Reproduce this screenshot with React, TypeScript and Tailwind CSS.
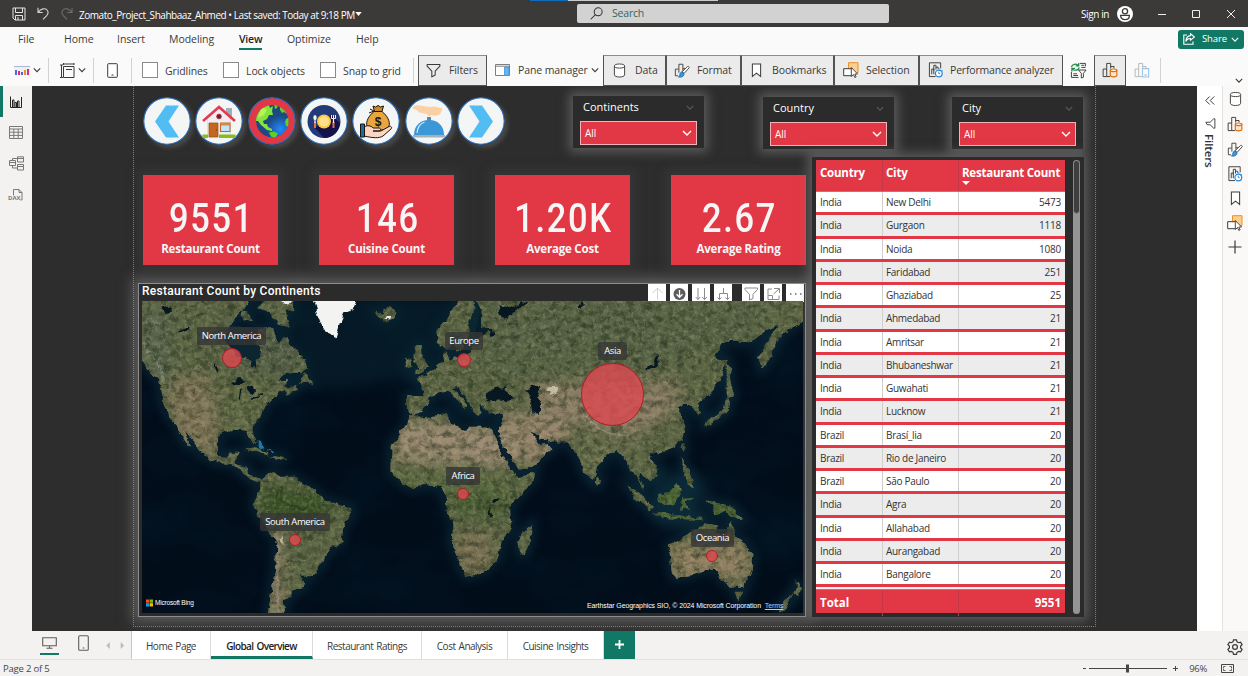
import React from "react";

const INK = "#3b3a39";

type IconProps = { className?: string };

/* ---------- small icons ---------- */
const Chevron = ({ className = "" }: IconProps) => (
  <svg viewBox="0 0 10 6" className={`shrink-0 ${className}`} fill="none" stroke="currentColor" strokeWidth="1.4">
    <path d="M1 1l4 4 4-4" />
  </svg>
);

const Funnel = ({ className = "" }: IconProps) => (
  <svg viewBox="0 0 16 16" className={`shrink-0 ${className}`} fill="none" stroke="currentColor" strokeWidth="1.1" strokeLinejoin="round">
    <path d="M1.2 1.6h13.6v1.8L9.8 8.6v4.2l-3.6 2V8.6L1.2 3.4z" />
  </svg>
);

const Cylinder = ({ className = "" }: IconProps) => (
  <svg viewBox="0 0 14 16" className={`shrink-0 ${className}`} fill="#fff" stroke={INK} strokeWidth="1">
    <path d="M1.5 3.2v9.6c0 1.2 2.4 2.2 5.5 2.2s5.5-1 5.5-2.2V3.2" />
    <ellipse cx="7" cy="3.2" rx="5.5" ry="2.2" />
  </svg>
);

const FormatIcon = ({ className = "" }: IconProps) => (
  <svg viewBox="0 0 18 18" className={`shrink-0 ${className}`} fill="none" stroke={INK} strokeWidth="1">
    <path d="M4.5 15.5h-3V8H5M5.5 12V2.500H10V10M10 7.500h3" />
    <path d="M16.600 5.200c.7.600.7 1 .2 1.600l-5.400 6-2.200-1.800 5.700-5.700c.6-.6 1.100-.6 1.700-.1z" fill="#fff" />
    <path d="M8.800 11.200l2.400 2c.2 2.600-2.200 4.400-6.200 3.600 1.500-.7 1.500-1.700 1.700-3 .2-1.500 1-2.400 2.100-2.600z" fill="#3a96dd" stroke="#1664a7" />
  </svg>
);

const BookmarkIcon = ({ className = "" }: IconProps) => (
  <svg viewBox="0 0 12 16" className={`shrink-0 ${className}`} fill="#fff" stroke={INK} strokeWidth="1.1">
    <path d="M1.500 1h9v13.500L6 10.800l-4.500 3.700z" />
  </svg>
);

const SelectionIcon = ({ className = "" }: IconProps) => (
  <svg viewBox="0 0 16 16" className={`shrink-0 ${className}`}>
    <path d="M5.500.7h9.500v10H5.500z" fill="#fcd08a" stroke="#e8912d" />
    <path d="M.7 6.700h8.500v7H.7z" fill="#fff" stroke={INK} />
    <path d="M8.300 5.500v9l2.200-2 1.300 3 1.300-.6-1.300-2.900h2.800z" fill="#fff" stroke={INK} strokeWidth=".9" />
  </svg>
);

const PerfIcon = ({ className = "" }: IconProps) => (
  <svg viewBox="0 0 16 17" className={`shrink-0 ${className}`} fill="none" stroke={INK} strokeWidth="1">
    <path d="M8 15.500H1.500V.8h12v6M4 13V7.500h2.200V13M6.200 9V3.500h2.300V8M8.500 5.500h2.300V7" />
    <circle cx="11.500" cy="12.200" r="3.600" stroke="#2b88d8" strokeWidth="1.300" fill="#fff" />
    <path d="M11.500 10.200v2.200h1.500M10.500 7.300h2M14.600 8.600l.9.900" stroke="#2b88d8" />
  </svg>
);

const BuildIcon = ({ className = "" }: IconProps) => (
  <svg viewBox="0 0 17 17" className={`shrink-0 ${className}`} fill="none" stroke={INK} strokeWidth="1">
    <path d="M5 15.500H1.200V7.500H5M8.500 15.500H5V1.500h4.200V7M9.200 4.800h3.600v2" />
    <path d="M8.800 8.800v5.400c0 .9 1.500 1.600 3.500 1.600s3.500-.7 3.500-1.600V8.800" fill="#fce3cc" stroke="#e06c00" strokeWidth="1.200" />
    <ellipse cx="12.300" cy="8.800" rx="3.500" ry="1.400" fill="#fff" stroke="#e06c00" strokeWidth="1.200" />
  </svg>
);

const BuildFaded = ({ className = "" }: IconProps) => (
  <svg viewBox="0 0 17 17" className={`shrink-0 ${className}`} fill="none" stroke="#b5b5b5" strokeWidth="1">
    <path d="M5 15.500H1.200V7.500H5M8.500 15.500H5V1.500h4.200V7M9.200 4.800h3.600v2" />
    <path d="M9 7h6.500v9H9zM11 14h2.500" stroke="#9cc6ea" strokeWidth="1.200" />
  </svg>
);

const SyncIcon = ({ className = "" }: IconProps) => (
  <svg viewBox="0 0 18 18" className={`shrink-0 ${className}`} fill="none" stroke={INK} strokeWidth="1">
    <path d="M10.500 1.500h5.800v3.200M12 3.500h3M12 5.800h4.300M1.500 10.500v5.800h7.500M3.500 12.500h4M3.500 14.300h5" />
    <path d="M1.500 5.500C2 2.500 6.500 1 9 3.800M9.200 1v3.200H6M9.800 5.600c-.6 3-5 4.300-7.500 1.600M2 10V6.800h3.200" stroke="#218a43" strokeWidth="1.300" />
    <path d="M9 8.500h8l-2.800 3.500v4.200l-2.200.8v-5z" fill="#fff" />
  </svg>
);

/* ---------- round navigation icons ---------- */
const NavLeft = () => <path d="M23 8.500h13L25.500 24.500 36 40.500H23L12 24.500z" fill="#52bdf2" />;
const NavRight = () => <path d="M25 8.500H12l10.500 16L12 40.500h13l11-16z" fill="#52bdf2" />;

const House = () => (
  <g>
    <path d="M31 11h6v11h-6z" fill="#9db0b8" />
    <path d="M24 10L12.500 22v18h23V22z" fill="#f1ecf0" stroke="#dcd6da" strokeWidth=".7" />
    <path d="M8 24L24 10l16 14" fill="none" stroke="#e63950" strokeWidth="2.600" />
    <circle cx="24" cy="19.500" r="2.400" fill="#4b2f3a" stroke="#d8293f" strokeWidth=".8" />
    <path d="M14 26h9v14h-9z" fill="#c4661f" stroke="#9b4d14" strokeWidth=".7" />
    <circle cx="21.300" cy="33" r=".6" fill="#4a2408" />
    <path d="M25.500 26h9.500v8.500h-9.500z" fill="#bfe6f7" stroke="#c4661f" strokeWidth="1.100" />
    <path d="M25.500 26h9.500v2.500h-9.500z" fill="#d58746" />
    <path d="M7.500 37.500H13V41H7.500zM24 37.500h16.500V41H24z" fill="#84bf1c" />
  </g>
);

const Globe = () => (
  <g>
    <defs>
      <radialGradient id="sea" cx=".75" cy=".75" r=".7">
        <stop offset="0" stopColor="#1f8cff" />
        <stop offset=".6" stopColor="#1b4b86" />
        <stop offset="1" stopColor="#1c4a80" />
      </radialGradient>
      <clipPath id="ball"><circle cx="24.300" cy="24.300" r="16.300" /></clipPath>
    </defs>
    <g clipPath="url(#ball)">
      <circle cx="24.300" cy="24.300" r="16.300" fill="url(#sea)" />
      <path d="M7 24l1-9 7-6 6-1 1 3 3-2-1 5 1 4-4 0-2 4-4 2 1 3 3 0 1 3 4 2 0 2-5-1-6-5-3-4z" fill="#86e33c" />
      <path d="M13 11l6 1-3 6-6 3z" fill="#b6f358" />
      <path d="M26 7l4 1-1 3-2 1zM32 9l5 4 2 4-3-2-2 1-2-3zM38 22l4-2v10l-4-1-1-4zM21 35.500l5-1 4 2-3 5-4-2z" fill="#5fd024" />
    </g>
  </g>
);

const Dinner = () => (
  <g>
    <circle cx="24" cy="24.500" r="16.500" fill="#243a78" />
    <path d="M31 18l9 8c-1 9-8 15-16 15l-9-10z" fill="#15124a" />
    <circle cx="24" cy="24.500" r="7" fill="#fbc847" />
    <circle cx="24" cy="24.500" r="5" fill="#ffe08a" />
    <path d="M15 25v6M33.500 25v6" stroke="#e0704e" strokeWidth="2" />
    <path d="M15 22v4M33.500 21v5" stroke="#f4f4f4" strokeWidth="1.200" />
    <ellipse cx="15" cy="20.500" rx="1.700" ry="2.600" fill="#f4f4f4" />
    <path d="M31.500 18v3.500h4V18M33.500 18v4" fill="none" stroke="#f4f4f4" strokeWidth="1" />
  </g>
);

const Money = () => (
  <g stroke="#1b1512" strokeWidth="1" strokeLinejoin="round">
    <path d="M22 14.500c-5 4-8.500 10-7 14.500 1 3 4 4 11 4s10-1 11-4c1.500-4.500-2-10.500-7-14.500z" fill="#e9a63f" />
    <path d="M21 9l2.500 1L26 8.500l2.500 1.500 3-1-1.500 5.500h-7.500z" fill="#c98a2b" />
    <path d="M18 12l4 2-5 2" fill="none" />
    <path d="M12 30c3-2 7-1.500 9 1h6c2 0 2 3 0 3h-6 8l8-4.500c2-.8 3.500 1 2 2.500L31 39c-4 2.500-10 2-19 0z" fill="#fbd5c0" />
    <path d="M8.500 27h4v13h-4z" fill="#236b94" />
    <text x="26" y="28.500" textAnchor="middle" fontSize="12" fontWeight="700" fontFamily="Liberation Sans, sans-serif" fill="#1b1512" stroke="none">$</text>
  </g>
);

const Cloche = () => (
  <g>
    <path d="M7.500 12c1-3.500 3-4 7-3.500l10 1.500 5-.5 8 2-2.500 6-5 1.500-3.500-1-2.500 1.500-2.500-2.500-7-1.500-3.500-3z" fill="#fbd0a3" />
    <path d="M22 20h4v4h-4z" fill="#77838a" />
    <path d="M9 38c0-9 6-15 15-15s15 6 15 15z" fill="#3a97d8" />
    <path d="M12 36c.5-6 3.500-9.500 7.500-11" fill="none" stroke="#d6ecf9" strokeWidth="1.100" />
    <path d="M8 38h32v2.500H8z" fill="#a6b1b6" />
  </g>
);

const navIcons = [NavLeft, House, Globe, Dinner, Money, Cloche, NavRight];

const NavCircle = ({ index, Art }: { index: number; Art: () => React.ReactElement }) => (
  <svg viewBox="0 0 48 48" className="h-12 w-12 rounded-full shadow-[3px_3px_4px_rgba(80,80,80,0.8)]">
    <circle cx="24" cy="24" r="23.300" fill={index === 2 ? "#e23744" : "#f4f5f5"} stroke="#2f6cb3" strokeWidth="1.300" />
    <Art />
  </svg>
);

/* ---------- title bar ---------- */
const TitleBar = () => (
  <div className="relative flex h-[27px] shrink-0 items-center bg-[#3b3a39] text-white">
    <div className="absolute left-[530px] top-0 h-px w-[38px] bg-[#0f6cbd]" />
    <div className="absolute left-[568px] top-0 h-px w-[150px] bg-[#c8cccb]" />
    <svg viewBox="0 0 14 14" className="ml-3 h-[14px] w-[14px]" fill="none" stroke="#e4e4e4" strokeWidth="1">
      <path d="M1 1h12v12H3l-2-2zM3.500 1v4.500h7V1M3.500 13V8.500h7V13M6 10v3" />
    </svg>
    <svg viewBox="0 0 12 13" className="ml-[11px] h-[13px] w-3" fill="none" stroke="#d4d4d4" strokeWidth="1.100">
      <path d="M1 .8v4.700h4.700M1.200 5.200C4 1.500 8 .7 10 3s1.200 4-.5 5.800L6 12.300" />
    </svg>
    <svg viewBox="0 0 12 13" className="ml-3 h-[13px] w-3" fill="none" stroke="#6f6e6d" strokeWidth="1.100">
      <path d="M11 .8v4.700H6.300M10.800 5.200C8 1.500 4 .7 2 3s-1.200 4 .5 5.800L6 12.300" />
    </svg>
    <div className="ml-[6px] w-[273px] whitespace-nowrap pt-[4px] text-[10px] tracking-[-0.460px]">
      Zomato_Project_Shahbaaz_Ahmed • Last saved: Today at 9:18 PM
    </div>
    <svg viewBox="0 0 8 5" className="ml-[3px] h-[4px] w-[7px]"><path d="M0 0h8L4 5z" fill="#fff" /></svg>
    <div className="ml-[215px] flex h-[19px] w-[312px] items-center rounded-[2px] bg-[#d2d2d2] pl-[13px] text-[10.500px] text-[#33665b]">
      <svg viewBox="0 0 14 14" className="mr-[9px] h-[13px] w-[13px]" fill="none" stroke="#333" strokeWidth="1.100">
        <circle cx="8.800" cy="5.200" r="4.300" /><path d="M5.600 8.400L.8 13.200" />
      </svg>
      <span className="tracking-[-0.2px]">Search</span>
    </div>
    <div className="ml-[192px] w-[30px] whitespace-nowrap pt-px text-[10px] tracking-[-0.400px]">Sign in</div>
    <svg viewBox="0 0 16 16" className="ml-[6px] h-4 w-4">
      <circle cx="8" cy="8" r="8" fill="#fff" />
      <circle cx="8" cy="5.300" r="2.600" fill="none" stroke="#3b3a39" strokeWidth="1.300" />
      <path d="M3.600 9.400h8.800c0 2.600-1.800 4.200-4.400 4.200s-4.400-1.600-4.400-4.200z" fill="none" stroke="#3b3a39" strokeWidth="1.300" />
    </svg>
    <svg viewBox="0 0 80 10" className="ml-[24px] h-[10px] w-[80px]" fill="none" stroke="#eee" strokeWidth="1">
      <path d="M1 5.500h8M35.500 1.500h7v7h-7zM70 1l8 8M78 1l-8 8" />
    </svg>
  </div>
);

/* ---------- ribbon ---------- */
const menu = [
  { label: "File", cls: "w-[46px]" },
  { label: "Home", cls: "w-[53px]" },
  { label: "Insert", cls: "w-[52px]" },
  { label: "Modeling", cls: "w-[70px]" },
  { label: "View", cls: "w-[48px]" },
  { label: "Optimize", cls: "w-[69px]" },
  { label: "Help", cls: "w-[40px]" },
];

const Check = ({ label, cls }: { label: string; cls: string }) => (
  <div className={`flex shrink-0 items-center ${cls}`}>
    <div className="mr-[7px] h-4 w-4 shrink-0 border border-[#8a8987] bg-white" />
    <span className="whitespace-nowrap pt-[3px]">{label}</span>
  </div>
);

const Divider = ({ cls = "" }: { cls?: string }) => <div className={`h-[25px] w-px shrink-0 bg-[#d5d3d1] ${cls}`} />;

const RibbonButton = ({ cls, label, children }: { cls: string; label?: string; children: React.ReactNode }) => (
  <div className={`flex h-[31px] shrink-0 items-center whitespace-nowrap border border-[#55534f] border-t-[#8f8d8b] bg-[#ebebeb] ${cls}`}>
    {children}
    {label && <span className="pt-[2px]">{label}</span>}
  </div>
);

const Ribbon = () => (
  <div className="flex h-[59px] shrink-0 flex-col bg-[#fafafa] text-[10.500px] tracking-[-0.1px] text-[#3b3a39]">
    <div className="flex h-[27px] items-center pl-[18px] pr-[5px]">
      {menu.map((m) => (
        <div key={m.label} className={`flex h-full flex-col items-start pt-[5px] ${m.cls}`}>
          <div className={m.label === "View" ? "border-b-2 border-[#117865] pb-px font-semibold leading-[15px] tracking-[-0.200px] text-[#222]" : "leading-[15px] tracking-[-0.050px]"}>{m.label}</div>
        </div>
      ))}
      <div className="-mr-px -mt-[3px] ml-auto flex h-[19px] w-[66px] items-center rounded-[3px] bg-[#117865] pl-[5px] text-[9.500px] text-white">
        <svg viewBox="0 0 12 12" className="mr-[7px] h-3 w-3" fill="none" stroke="#fff" strokeWidth="1.100">
          <path d="M4 2H.8v9.200H10V8.500M7.500.8l4 3.200-4 3.200V5.500C5 5.400 3.500 6.500 2.800 8.500 3 5 4.500 2.800 7.500 2.600z" />
        </svg>
        Share
        <Chevron className="ml-[4px] h-[5px] w-[8px]" />
      </div>
    </div>
    <div className="flex h-8 items-center">
      <svg viewBox="0 0 16 9" className="ml-[14px] h-[9px] w-4 shrink-0">
        <path d="M0 0h16v9H0z" fill="#f3ecf0" />
        <path d="M1 4h2v5H1zM7 6h2v3H7z" fill="#4a6fe0" />
        <path d="M4 5h2v4H4zM13 3h2v6h-2z" fill="#d6336c" />
        <path d="M10 4h2v5h-2z" fill="#e8912d" />
        <path d="M0 0h16v1H0z" fill="#a7b7d8" />
      </svg>
      <Chevron className="ml-[3px] h-[6px] w-[8px]" />
      <Divider cls="ml-[7px]" />
      <svg viewBox="0 0 15 15" className="ml-[11px] h-[15px] w-[15px] shrink-0" fill="none" stroke={INK} strokeWidth="1">
        <path d="M3.500 3.500h10.500v11H3.500zM1.500 2v12.500M0 2h3M0 14.500h3M3.500 1h10.500M3.500 0v2M14 0v2M6 6.500h6" />
      </svg>
      <Chevron className="ml-[3px] h-[6px] w-[8px]" />
      <Divider cls="ml-[7px]" />
      <svg viewBox="0 0 11 15" className="ml-[13px] h-[15px] w-[11px] shrink-0" fill="#fff" stroke={INK} strokeWidth="1">
        <rect x=".7" y=".7" width="9.600" height="13.600" rx=".6" /><path d="M4.500 12h2" />
      </svg>
      <Divider cls="ml-[13px]" />
      <Check label="Gridlines" cls="ml-[10px] w-[81px]" />
      <Check label="Lock objects" cls="w-[97px]" />
      <Check label="Snap to grid" cls="w-[93px]" />
      <Divider />
      <RibbonButton cls="ml-[4px] w-[69px] pl-[7px]" label="Filters"><Funnel className="mr-[8px] h-[15px] w-[15px]" /></RibbonButton>
      <div className="flex w-[116px] shrink-0 items-center whitespace-nowrap pl-[8px]">
        <svg viewBox="0 0 15 12" className="mr-[8px] h-3 w-[15px] shrink-0" fill="#fff" stroke="#807e7c">
          <path d="M.5.500h14v11H.5z" /><path d="M1 2.200h13" /><path d="M9.500 3h4.500v8.500H9.500z" fill="#6cb2ea" stroke="#3f94dc" strokeWidth=".8" />
        </svg>
        <span className="pt-[2px]">Pane manager</span>
        <Chevron className="ml-[3px] h-[6px] w-[8px]" />
      </div>
      <RibbonButton cls="w-[63px] pl-[9px]" label="Data"><Cylinder className="mr-[9px] h-[15px] w-[13px]" /></RibbonButton>
      <RibbonButton cls="w-[75px] pl-[7px]" label="Format"><FormatIcon className="mr-[7px] h-4 w-4" /></RibbonButton>
      <RibbonButton cls="w-[93px] pl-[9px]" label="Bookmarks"><BookmarkIcon className="mr-[10px] h-[15px] w-[11px]" /></RibbonButton>
      <RibbonButton cls="w-[85px] pl-[8px]" label="Selection"><SelectionIcon className="mr-[7px] h-4 w-4" /></RibbonButton>
      <RibbonButton cls="w-[144px] pl-[8px] tracking-[-0.180px]" label="Performance analyzer"><PerfIcon className="mr-[7px] h-4 w-[15px]" /></RibbonButton>
      <SyncIcon className="ml-[7px] h-[17px] w-[17px]" />
      <RibbonButton cls="ml-[7px] w-[32px] justify-center"><BuildIcon className="h-4 w-4" /></RibbonButton>
      <BuildFaded className="ml-[8px] h-4 w-4" />
      <Divider cls="ml-[10px]" />
      <Chevron className="ml-auto mr-[5px] mt-[20px] h-[5px] w-[8px]" />
    </div>
  </div>
);

/* ---------- report visuals ---------- */
const Slicer = ({ title, cls }: { title: string; cls: string }) => (
  <div className={`h-[52px] w-[131px] bg-[#2b2b2b] px-[7px] text-white shadow-[0_0_10px_4px_rgba(135,135,135,0.5)] ${cls}`}>
    <div className="flex h-[25px] items-center justify-between pb-[2px] pl-[3px] pr-[3px] text-[11px] font-medium">
      {title}
      <Chevron className="h-[5px] w-[8px] text-[#5b5b5b]" />
    </div>
    <div className="flex h-[24px] items-center justify-between border border-[#f3b3b8] bg-[#e23744] pl-[4px] pr-[4px] text-[10px]">
      All
      <Chevron className="h-[6px] w-[10px]" />
    </div>
  </div>
);

const cards = [
  { value: "9551", label: "Restaurant Count" },
  { value: "146", label: "Cuisine Count" },
  { value: "1.20K", label: "Average Cost" },
  { value: "2.67", label: "Average Rating" },
];

const Card = ({ value, label }: { value: string; label: string }) => (
  <div className="flex h-[90px] w-[135px] flex-col items-center bg-[#e23744] pt-[22px] text-[#f6f6f6] shadow-[0_0_10px_6px_rgba(70,70,70,0.35)]">
    <div className="h-[41px] scale-x-[0.84] pl-[2px] font-['Roboto',sans-serif] text-[41px] font-medium leading-[42px] tracking-[2px]">{value}</div>
    <div className="mt-[3px] whitespace-nowrap text-[11.500px] font-bold leading-[15px] tracking-[-0.200px]">{label}</div>
  </div>
);

const land = [
  // North America
  "M10 50L10 235 30 250 50 285 72 298 80 340 85 370 100 410 125 435 140 470 160 500 172 502 150 455 140 440 165 470 190 500 200 525 250 550 290 553 320 575 345 600 370 606 382 600 365 592 342 582 338 560 305 555 300 540 312 515 285 515 275 535 255 530 248 505 250 470 262 458 290 453 310 452 335 455 345 475 355 492 361 485 355 460 352 440 375 415 390 385 415 355 430 340 450 330 455 345 490 330 480 318 450 322 445 318 460 300 430 300 445 285 480 278 500 280 515 262 510 240 490 215 470 200 450 170 432 190 415 150 390 142 370 150 365 190 380 205 375 235 362 240 365 265 352 262 345 235 300 225 285 200 265 180 280 150 300 115 320 95 350 50Z",
  "M390 50L470 50 475 90 452 92 462 140 430 130 412 115 400 95 370 85Z",
  "M325 92L345 108 350 124 322 118Z",
  "M510 275L522 290 535 312 515 305 495 308Z",
  "M330 508L360 502 395 515 402 527 370 518ZM402 533L425 526 458 535 430 541Z",
  // South America
  "M376 603L400 582 415 575 440 590 480 590 500 610 540 630 560 655 600 670 645 685 648 702 625 740 620 790 585 805 560 850 530 888 500 890 485 880 508 905 505 925 470 930 470 950 445 960 450 985 440 1005 398 1005 410 930 420 870 425 780 400 755 375 715 355 680 360 655 375 630Z",
  // Iceland, Britain, Ireland
  "M718 92L740 98 760 82 785 92 780 115 755 125 735 115 720 108Z",
  "M840 195L860 195 855 215 870 240 882 260 865 278 835 282 850 262 840 245 838 220ZM810 240L830 233 832 260 812 266Z",
  // Scandinavia
  "M975 50L1012 50 1020 90 1000 120 1003 160 985 205 965 215 955 190 935 207 908 192 904 150 935 115Z",
  // Eurasia
  "M1018 50L1040 92 1035 140 1075 148 1022 180 1010 215 975 235 955 228 945 240 930 210 925 245 905 260 885 275 860 290 845 298 862 315 865 345 818 345 812 355 818 395 840 403 855 398 875 375 885 350 915 340 940 335 960 355 980 370 985 388 997 372 975 345 950 325 968 322 990 350 1005 365 1015 395 1030 408 1040 395 1030 370 1045 378 1060 400 1100 402 1102 425 1092 445 1092 465 1110 505 1150 572 1200 555 1235 520 1252 508 1235 490 1215 492 1203 475 1183 455 1200 460 1215 475 1235 480 1245 487 1295 487 1320 515 1335 540 1345 575 1367 604 1380 590 1385 560 1420 525 1445 510 1465 530 1480 550 1490 575 1505 590 1520 620 1532 637 1512 600 1515 578 1545 602 1572 585 1565 560 1545 525 1570 520 1620 500 1640 480 1655 440 1640 405 1625 385 1640 378 1650 370 1668 378 1690 404 1702 398 1690 375 1700 360 1725 345 1760 290 1778 240 1740 235 1760 185 1850 185 1895 150 1925 138 1870 230 1880 265 1910 225 1930 180 1960 150 2020 115 2020 50Z",
  // Africa
  "M830 405L870 412 935 400 945 435 990 450 1005 440 1040 440 1074 448 1082 470 1096 510 1118 550 1141 583 1150 592 1200 578 1195 605 1150 650 1125 680 1130 745 1100 785 1090 830 1060 870 1020 885 990 890 975 850 950 790 955 730 935 690 930 640 920 620 870 615 830 625 790 600 765 570 770 500 800 450Z",
  // Madagascar, Sri Lanka
  "M1190 732L1187 780 1170 822 1155 820 1150 785 1165 755ZM1385 590L1397 605 1390 617 1383 608Z",
  // South-east Asia
  "M1478 618L1510 635 1550 680 1548 693 1500 655ZM1550 697L1620 705 1700 714 1695 720 1590 714ZM1570 645L1600 640 1625 612 1638 632 1620 670 1590 678 1572 665ZM1640 655L1675 650 1650 665 1665 690 1645 682 1640 695Z",
  "M1710 658L1740 668 1790 678 1825 718 1800 715 1770 695 1740 702 1735 680ZM1640 532L1655 560 1675 600 1677 628 1655 610 1645 575ZM1645 490L1652 500 1646 515 1640 505Z",
  "M1775 250L1788 270 1786 320 1800 345 1783 355 1778 395 1745 420 1708 438 1712 425 1740 405 1768 385 1775 345Z",
  // Oceania
  "M1600 795L1665 760 1690 738 1705 730 1745 735 1745 758 1772 770 1785 725 1800 760 1830 790 1855 830 1850 870 1830 920 1790 920 1765 905 1740 870 1710 870 1670 885 1625 895 1610 880 1605 830ZM1800 935L1825 935 1812 962Z",
  "M1985 895L1998 930 1990 945 1975 938 1960 975 1935 998 1930 985 1965 945 1985 930Z",
].join("");

const lakes =
  "M288 312L310 293 332 305 312 316ZM315 330L324 325 317 356 311 358ZM333 320L355 325 360 335 345 342ZM343 356L370 346 372 350 347 361ZM363 344L385 339 383 345ZM80 82L112 76 108 98 88 102ZM128 155L165 135 160 148 132 160ZM1052 345L1085 318 1098 326 1112 318 1108 330 1140 355 1100 362 1055 360ZM1174 335L1190 313 1216 322 1203 345 1216 370 1214 402 1195 398 1190 365ZM1530 266L1558 248 1570 222 1574 245 1548 270ZM1090 75L1130 85 1160 63 1180 66 1140 90 1115 115 1100 110ZM1076 655L1092 652 1085 668 1075 668ZM1060 685L1065 686 1070 712 1064 710ZM240 250L250 270 246 275 236 255ZM1065 155L1078 150 1082 163 1068 168ZM1325 80L1345 63 1350 70 1335 84Z";

const WorldMap = () => (
  <svg viewBox="21 63 1983 936" preserveAspectRatio="none" className="absolute inset-0 h-full w-full">
    <defs>
      <filter id="coast" x="0" y="0" width="2010" height="1010" filterUnits="userSpaceOnUse" colorInterpolationFilters="sRGB">
        <feTurbulence type="fractalNoise" baseFrequency="0.045" numOctaves="3" seed="4" result="n" />
        <feDisplacementMap in="SourceGraphic" in2="n" scale="18" xChannelSelector="R" yChannelSelector="G" />
      </filter>
      <filter id="soft" x="-30%" y="-30%" width="160%" height="160%" colorInterpolationFilters="sRGB"><feGaussianBlur stdDeviation="20" /></filter>
      <filter id="shelfBlur" x="0" y="0" width="2010" height="1010" filterUnits="userSpaceOnUse" colorInterpolationFilters="sRGB"><feGaussianBlur stdDeviation="14" /></filter>
      <filter id="grain" x="0" y="0" width="2010" height="1010" filterUnits="userSpaceOnUse" colorInterpolationFilters="sRGB">
        <feTurbulence type="fractalNoise" baseFrequency="0.04 0.055" numOctaves="5" seed="11" />
        <feColorMatrix type="matrix" values="0 0 0 0 0.1  0 0 0 0 0.15  0 0 0 0 0.08  2.4 0 0 0 -0.95" />
      </filter>
      <filter id="light" x="0" y="0" width="2010" height="1010" filterUnits="userSpaceOnUse" colorInterpolationFilters="sRGB">
        <feTurbulence type="fractalNoise" baseFrequency="0.09" numOctaves="4" seed="27" />
        <feColorMatrix type="matrix" values="0 0 0 0 0.74  0 0 0 0 0.7  0 0 0 0 0.55  0 2.8 0 0 -1.2" />
      </filter>
      <filter id="deep" x="0" y="0" width="2010" height="1010" filterUnits="userSpaceOnUse" colorInterpolationFilters="sRGB">
        <feTurbulence type="fractalNoise" baseFrequency="0.004 0.006" numOctaves="4" seed="8" />
        <feColorMatrix type="matrix" values="0 0 0 0 0.02  0 0 0 0 0.14  0 0 0 0 0.2  2 0 0 0 -0.85" />
      </filter>
      <clipPath id="landClip"><path d={land} /></clipPath>
    </defs>
    <path d="M0 0h2010v1010H0z" fill="#020d1a" />
    <path d="M0 0h2010v1010H0z" filter="url(#deep)" opacity=".4" />
    <path d={land} fill="none" stroke="#0d2c3b" strokeWidth="24" filter="url(#shelfBlur)" opacity=".75" />
    <path d="M400 50L980 50 900 300 780 290 600 330 520 300 480 180Z" fill="#08232f" opacity=".6" filter="url(#soft)" />
    <path d="M1540 560L1720 600 1700 760 1560 740Z" fill="#0d2f3d" opacity=".6" filter="url(#soft)" />
    <path d="M270 130L380 150 380 250 290 220ZM1000 60L1040 60 1010 220 980 210Z" fill="#0b2531" />
    <g filter="url(#coast)">
      <g clipPath="url(#landClip)">
        <path d="M0 0h2010v1010H0z" fill="#5c6645" />
        <g filter="url(#soft)">
          <path d="M100 300L220 280 250 420 240 540 120 470Z" fill="#83775a" />
          <path d="M20 60L120 120 100 320 20 240Z" fill="#59664e" />
          <path d="M250 100L480 150 500 280 300 280Z" fill="#535f48" />
          <path d="M250 300L420 300 350 450 260 450Z" fill="#616b47" />
          <path d="M780 420L1100 440 1140 560 950 550 780 545Z" fill="#9b8a72" />
          <path d="M1080 400L1300 400 1300 480 1240 560 1130 540Z" fill="#96856c" />
          <path d="M1180 310L1640 300 1620 400 1500 470 1360 440 1200 400Z" fill="#8b7e65" />
          <path d="M780 575L1130 590 1130 640 940 640 780 620Z" fill="#5d6c42" />
          <path d="M940 620L1120 640 1110 720 950 700Z" fill="#4b5f36" />
          <path d="M960 760L1080 760 1050 880 980 880Z" fill="#7e7255" />
          <path d="M380 620L560 640 610 700 480 740 380 700Z" fill="#385226" />
          <path d="M400 770L440 770 450 1000 400 1000Z" fill="#8a7c66" />
          <path d="M1050 60L1900 60 1850 180 1500 280 1050 280Z" fill="#586446" />
          <path d="M1600 790L1840 790 1850 900 1610 890Z" fill="#918061" />
          <path d="M1320 470L1500 480 1480 560 1370 590Z" fill="#69704e" />
          <path d="M1550 600L1820 650 1820 730 1560 720Z" fill="#486432" />
        </g>
        <path d="M0 0h2010v1010H0z" filter="url(#grain)" opacity=".55" />
        <path d="M0 0h2010v1010H0z" filter="url(#light)" opacity=".28" />
        <path d="M1240 322L1265 320 1268 338 1245 345ZM430 775L440 770 447 795 438 790Z" fill="#d9cdb8" opacity=".8" />
        <path d="M1350 405Q1400 470 1480 465" fill="none" stroke="#cfc9bb" strokeWidth="4" opacity=".3" />
        <path d="M21 190Q70 240 90 310" fill="none" stroke="#c6cabf" strokeWidth="6" opacity=".3" strokeDasharray="14 9" />
        <path d="M420 760Q437 830 425 1000" fill="none" stroke="#b8a88f" strokeWidth="7" opacity=".3" />
      </g>
      <path d={lakes} fill="#071721" />
      <path d="M530 50L668 50 652 90 628 100 614 130 602 172 575 160 556 130 546 100Z" fill="#f3f3f1" />
      <path d="M440 50L465 50 468 72 445 74ZM755 108L772 108 768 118 752 116Z" fill="#e9ecea" />
      <path d="M368 480L380 485 392 502 380 505 368 498ZM395 506L416 516 410 520Z" fill="#1c78a8" />
    </g>
  </svg>
);

const Pill = ({ cls, children }: { cls: string; children: React.ReactNode }) => (
  <div className={`absolute flex h-[18px] items-center justify-center whitespace-nowrap rounded-[2px] bg-[#363636]/80 pt-px text-[9.500px] tracking-[-0.400px] text-white ${cls}`}>{children}</div>
);

const Bubble = ({ cls }: { cls: string }) => <div className={`absolute rounded-full border border-[#b01c28] bg-[#dd4a50]/80 ${cls}`} />;

const ToolBox = ({ children, cls = "" }: { children: React.ReactNode; cls?: string }) => (
  <svg viewBox="0 0 18 18" className={`h-[18px] w-[18px] bg-white ${cls}`} fill="none" stroke="#8c8b8a" strokeWidth="1">{children}</svg>
);

const MapVisual = () => (
  <div className="mt-[18px] h-[334px] w-[668px] border border-[#8d8d8d] bg-[#2b2b2b] px-[3px] shadow-[0_0_12px_6px_rgba(125,125,125,0.55)]">
    <div className="flex h-[17px] items-start justify-between">
      <div className="font-['Roboto',sans-serif] text-[12px] font-medium leading-[14px] tracking-[0.280px] text-white">Restaurant Count by Continents</div>
      <div className="-mr-[2px] flex gap-[4px]">
        <ToolBox><path d="M9.500 15.500V4.500M4.500 9l5-5 5 5" stroke="#cfcfcf" /></ToolBox>
        <ToolBox><circle cx="9.500" cy="10" r="6" fill="#5d5c5b" stroke="none" /><path d="M9.500 6v7M6.500 10.300l3 3 3-3" stroke="#fff" strokeWidth="1.300" /></ToolBox>
        <ToolBox><path d="M6 4v11.500M3.700 13L6 15.500 8.300 13M12.500 4v11.500M10.200 13l2.300 2.500 2.300-2.500" /></ToolBox>
        <ToolBox><path d="M9.500 4v5.500M5.500 15.500v-6h8v6M3.500 13.500l2 2 2-2M11.500 13.500l2 2 2-2" /></ToolBox>
        <ToolBox cls="ml-[6px]"><path d="M3 4h12.500v1.500L11 10.300v4.200l-3.500 1.500v-5.700L3 5.500z" /></ToolBox>
        <ToolBox><path d="M8 5H4v10.500h11v-4M4 11.500h4.500v4M10 4.500h5.500V9M15 5l-5.500 5" /></ToolBox>
        <ToolBox><path d="M4 10h1.500M9 10h1.500M14 10h1.500" strokeWidth="1.600" stroke="#6c6b6a" /></ToolBox>
      </div>
    </div>
    <div className="relative h-[312px] w-[661px] overflow-hidden">
      <WorldMap />
      <Bubble cls="left-[80px] top-[47px] h-[20px] w-[20px]" />
      <Bubble cls="left-[315px] top-[52px] h-[14px] w-[14px]" />
      <Bubble cls="left-[439px] top-[62px] h-[63px] w-[63px]" />
      <Bubble cls="left-[315px] top-[187px] h-[12px] w-[12px]" />
      <Bubble cls="left-[147px] top-[233px] h-[12px] w-[12px]" />
      <Bubble cls="left-[564px] top-[249px] h-[12px] w-[12px]" />
      <Pill cls="left-[55px] top-[26px] w-[69px]">North America</Pill>
      <Pill cls="left-[303px] top-[31px] w-[38px]">Europe</Pill>
      <Pill cls="left-[456px] top-[41px] w-[29px]">Asia</Pill>
      <Pill cls="left-[304px] top-[166px] w-[34px]">Africa</Pill>
      <Pill cls="left-[118px] top-[212px] w-[70px]">South America</Pill>
      <Pill cls="left-[549px] top-[228px] w-[43px]">Oceania</Pill>
      <div className="absolute left-[4px] top-[297px] flex items-center gap-[2px] whitespace-nowrap font-['Liberation_Sans',sans-serif] text-[6.500px] tracking-[-0.180px] text-white">
        <svg viewBox="0 0 8 8" className="h-[8px] w-[7px]">
          <path d="M0 0h3.700v3.700H0z" fill="#f25022" /><path d="M4.200 0H8v3.700H4.200z" fill="#7fba00" />
          <path d="M0 4.200h3.700V8H0z" fill="#00a4ef" /><path d="M4.200 4.200H8V8H4.200z" fill="#ffb900" />
        </svg>
        Microsoft Bing
      </div>
      <div className="absolute left-[445px] top-[300px] whitespace-nowrap font-['Liberation_Sans',sans-serif] text-[7px] leading-[9px] tracking-[-0.100px] text-white">
        Earthstar Geographics SIO, © 2024 Microsoft Corporation <span className="ml-[2px] text-[#b9c9f0] underline">Terms</span>
      </div>
    </div>
  </div>
);

const rows: [string, string, number][] = [
  ["India", "New Delhi", 5473], ["India", "Gurgaon", 1118], ["India", "Noida", 1080], ["India", "Faridabad", 251],
  ["India", "Ghaziabad", 25], ["India", "Ahmedabad", 21], ["India", "Amritsar", 21], ["India", "Bhubaneshwar", 21],
  ["India", "Guwahati", 21], ["India", "Lucknow", 21], ["Brazil", "Brasí_lia", 20], ["Brazil", "Rio de Janeiro", 20],
  ["Brazil", "São Paulo", 20], ["India", "Agra", 20], ["India", "Allahabad", 20], ["India", "Aurangabad", 20], ["India", "Bangalore", 20],
];

const TableVisual = () => (
  <div className="flex h-[460px] w-[272px] bg-[#2b2b2b] pl-[4px] pt-[3px] shadow-[0_0_10px_4px_rgba(135,135,135,0.5)]">
    <div className="w-[249px]">
      <div className="grid h-[32px] grid-cols-[67px_76px_106px] border-b border-[#8b7fc0] bg-[#e23744] text-[11.500px] font-bold leading-[15px] tracking-[-0.230px] text-white">
        <div className="border-r border-[#c43845] pl-[4px] pt-[5px]">Country</div>
        <div className="border-r border-[#c43845] pl-[3px] pt-[5px]">City</div>
        <div className="whitespace-nowrap pl-[3px] pt-[5px]">
          Restaurant Count
          <svg viewBox="0 0 8 4" className="mt-px h-[4px] w-[8px]"><path d="M0 0h8L4 4z" fill="#fff" /></svg>
        </div>
      </div>
      {rows.map(([country, city, count], i) => (
        <div key={city} className={`grid h-[23.250px] grid-cols-[67px_76px_106px] border-b-[3px] border-[#e23744] text-[10px] leading-[20px] tracking-[-0.300px] text-[#333] ${i % 2 ? "bg-[#ececec]" : "bg-white"}`}>
          <div className="border-r border-[#cfcfcf] pl-[4px]">{country}</div>
          <div className="whitespace-nowrap border-r border-[#cfcfcf] pl-[3px]">{city}</div>
          <div className="pr-[4px] text-right tracking-[-0.200px]">{count}</div>
        </div>
      ))}
      <div className="h-[3px] border-b border-[#8b7fc0] bg-[#f3eef2]" />
      <div className="grid h-[23px] grid-cols-[67px_76px_106px] bg-[#e23744] text-[11.500px] font-bold leading-[26px] text-white">
        <div className="border-r border-[#c43845] pl-[4px]">Total</div>
        <div className="border-r border-[#c43845]" />
        <div className="pr-[4px] text-right">9551</div>
      </div>
    </div>
    <div className="ml-[8px] h-[454px] w-[7px] overflow-hidden rounded-full bg-[#949494]">
      <div className="h-[54px] rounded-full border border-[#8a8a8a] bg-[#3f3f3f]" />
    </div>
  </div>
);

const ReportPage = () => (
  <div className="ml-[101px] h-[541px] w-[963px] border-x border-b border-dotted border-[#7e7e7e]">
    <div className="flex h-[71px] pt-[10px]">
      <div className="flex gap-[4.330px] pl-[9px] pt-px">
        {navIcons.map((Art, i) => <NavCircle key={i} index={i} Art={Art} />)}
      </div>
      <Slicer title="Continents" cls="ml-[68px]" />
      <Slicer title="Country" cls="ml-[59px] mt-px" />
      <Slicer title="City" cls="ml-[58px] mt-px" />
    </div>
    <div className="flex pl-[4px]">
      <div className="w-[674px] pt-[18px]">
        <div className="flex w-[668px] justify-between pl-[5px]">
          {cards.map((c) => <Card key={c.label} {...c} />)}
        </div>
        <MapVisual />
      </div>
      <TableVisual />
    </div>
  </div>
);

/* ---------- side rails ---------- */
const LeftRail = () => (
  <div className="w-8 shrink-0 bg-[#f3f2f1]">
    <div className="flex h-[31px] items-center border-l-[3px] border-[#117865] pl-[7px]">
      <svg viewBox="0 0 12 12" className="h-3 w-3" fill="none" stroke="#252423" strokeWidth="1">
        <path d="M.5.500v11h11V1M2.500 4h1.500v7.500H2.500zM5 6.500h1.500v5H5zM7.500 5h1.500v6.500H7.500z" />
      </svg>
    </div>
    <div className="flex flex-col gap-[17px] pl-[9px] pt-[9px]">
      <svg viewBox="0 0 14 13" className="h-[13px] w-[14px]" fill="none" stroke="#7a7876" strokeWidth="1">
        <path d="M.5.500h13v12H.5zM.5 3h13M.5 6.200h13M.5 9.400h13M4.800 3v9.500M9.200 3v9.500" />
      </svg>
      <svg viewBox="0 0 15 15" className="h-[15px] w-[15px]" fill="none" stroke="#7a7876" strokeWidth="1">
        <path d="M.5 4.500h6v5h-6zM8.500.8h6v5.200h-6zM8.500 8.500h6v5.500h-6zM.5 6.500h6M8.500 2.500h6M8.500 10.500h6M3.500 4.500V2.500h5M3.500 9.500v2.500h5" />
      </svg>
      <div className="relative h-[16px] w-[15px]">
        <svg viewBox="0 0 15 16" className="h-4 w-[15px]" fill="none" stroke="#7a7876" strokeWidth="1">
          <path d="M4.500 7.500V1.500h5.500l3 3v7.500h-1.500M10 1.500v3h3" />
        </svg>
        <span className="absolute -left-px top-[7px] text-[6px] font-bold leading-[7px] text-[#7a7876]">DAX</span>
      </div>
    </div>
  </div>
);

const RightRail = () => (
  <div className="flex w-[51px] shrink-0">
    <div className="flex w-[26px] shrink-0 flex-col items-center border-r border-[#e5e3e1] bg-white pt-[10px]">
      <svg viewBox="0 0 10 9" className="h-[9px] w-[10px]" fill="none" stroke={INK} strokeWidth="1"><path d="M4.700.5l-4 4 4 4M9.200.5l-4 4 4 4" /></svg>
      <Funnel className="ml-[2px] mt-[13px] h-[11px] w-[11px] rotate-90 text-[#111]" />
      <span className="-ml-px mt-[5px] text-[11.500px] font-semibold leading-[14px] tracking-[-0.100px] text-[#333] [writing-mode:vertical-rl]">Filters</span>
    </div>
    <div className="flex w-[25px] flex-col items-center gap-[9px] bg-[#faf9f8] pr-px pt-[5px]">
      <Cylinder className="h-4 w-[13px]" />
      <BuildIcon className="h-4 w-4" />
      <FormatIcon className="h-4 w-4" />
      <PerfIcon className="h-4 w-4" />
      <BookmarkIcon className="h-[15px] w-[11px]" />
      <SelectionIcon className="h-4 w-4" />
      <svg viewBox="0 0 14 14" className="h-[14px] w-[14px]" stroke={INK} strokeWidth="1.200"><path d="M7 .5v13M.5 7h13" /></svg>
    </div>
  </div>
);

/* ---------- bottom ---------- */
const tabs = [
  { label: "Home Page", cls: "w-[79px]" },
  { label: "Global Overview", cls: "w-[102px]" },
  { label: "Restaurant Ratings", cls: "w-[109px]" },
  { label: "Cost Analysis", cls: "w-[86px]" },
  { label: "Cuisine Insights", cls: "w-[96px]" },
];

const TabBar = () => (
  <div className="flex h-[28px] shrink-0 bg-[#f3f2f1] pl-[32px] text-[10px] tracking-[-0.500px] text-[#3b3a39]">
    <div className="flex w-[100px] items-center border-r border-[#c8c6c4]">
      <div className="ml-[7px] flex h-full w-[20px] flex-col items-center pt-[6px]">
        <svg viewBox="0 0 15 12" className="h-3 w-[15px]" fill="none" stroke="#605e5c" strokeWidth="1.100"><path d="M.7.700h13.600v8H.7zM7.500 8.700v2.600M4.500 11.300h6" /></svg>
        <div className="mt-[4px] h-[2px] w-[19px] bg-[#117865]" />
      </div>
      <svg viewBox="0 0 11 16" className="-mt-[4px] ml-[19px] h-4 w-[11px]" fill="none" stroke="#605e5c" strokeWidth="1.100"><rect x=".7" y=".7" width="9.600" height="14.600" rx="1" /><path d="M4.700 13h1.600" /></svg>
      <svg viewBox="0 0 20 8" className="ml-[16px] h-[7px] w-[20px]" fill="#bdbbb9"><path d="M4 0v8L0 4zM16.500 0v8l4-4z" /></svg>
    </div>
    {tabs.map((t) => {
      const active = t.label === "Global Overview";
      return (
        <div key={t.label} className={`flex items-center justify-center whitespace-nowrap border-r border-[#dddbd9] bg-white ${t.cls} ${active ? "border-b-[3px] border-b-[#117865] pt-[5px] font-semibold tracking-[-0.620px] text-[#222]" : "pt-[2px]"}`}>
          <span className="[word-spacing:1px]">{t.label}</span>
        </div>
      );
    })}
    <div className="flex w-[31px] items-center justify-center bg-[#117865]">
      <svg viewBox="0 0 10 10" className="-mt-[2px] h-[9px] w-[9px]" stroke="#fff" strokeWidth="2"><path d="M5 0v10M0 5h10" /></svg>
    </div>
    <svg viewBox="0 0 16 16" className="ml-auto mr-[5px] mt-[8px] h-4 w-4" fill="none" stroke={INK} strokeWidth="1.200">
      <path d="M6.500.8h3l.5 2 1.600.9 2-.6 1.500 2.600L13.600 7v2l1.500 1.400-1.500 2.500-2-.5-1.600.9-.5 2h-3l-.5-2-1.600-.9-2 .5L.9 10.400 2.400 9V7L.9 5.700l1.500-2.600 2 .6L6 2.800z" />
      <circle cx="8" cy="8" r="2.400" />
    </svg>
  </div>
);

const StatusBar = () => (
  <div className="flex h-[17px] shrink-0 items-center border-t border-[#e1dfdd] bg-[#f3f2f1] pl-[3px] text-[9.500px] text-[#484644]">
    <span className="pt-[3px] tracking-[-0.200px]">Page 2 of 5</span>
    <svg viewBox="0 0 98 10" className="ml-auto h-[10px] w-[98px]" stroke="#484644" strokeWidth="1">
      <path d="M0 5.500h3M6 5.500h78M90 5.500h5M92.500 3v5" /><path d="M44.500 1.500v8" strokeWidth="3" />
    </svg>
    <span className="ml-[8px] pt-[2px] tracking-[-0.300px]">96%</span>
    <svg viewBox="0 0 13 9" className="ml-[14px] mr-[14px] h-[9px] w-[13px]" fill="none" stroke="#484644"><path d="M.5.500h12v8H.5z" /><path d="M2.500 4.500V2.500h2M8.500 2.500h2v2M10.500 5v1.500h-2M4.500 6.500h-2V5" strokeWidth=".8" /></svg>
  </div>
);

export default function App() {
  return (
    <div className="flex h-[676px] w-[1248px] flex-col overflow-hidden bg-[#f3f2f1] font-['Open_Sans','Noto_Sans',sans-serif]">
      <TitleBar />
      <Ribbon />
      <div className="flex h-[545px] shrink-0">
        <LeftRail />
        <div className="w-[1165px] shrink-0 overflow-hidden bg-[#2d2d2d]"><ReportPage /></div>
        <RightRail />
      </div>
      <TabBar />
      <StatusBar />
    </div>
  );
}
